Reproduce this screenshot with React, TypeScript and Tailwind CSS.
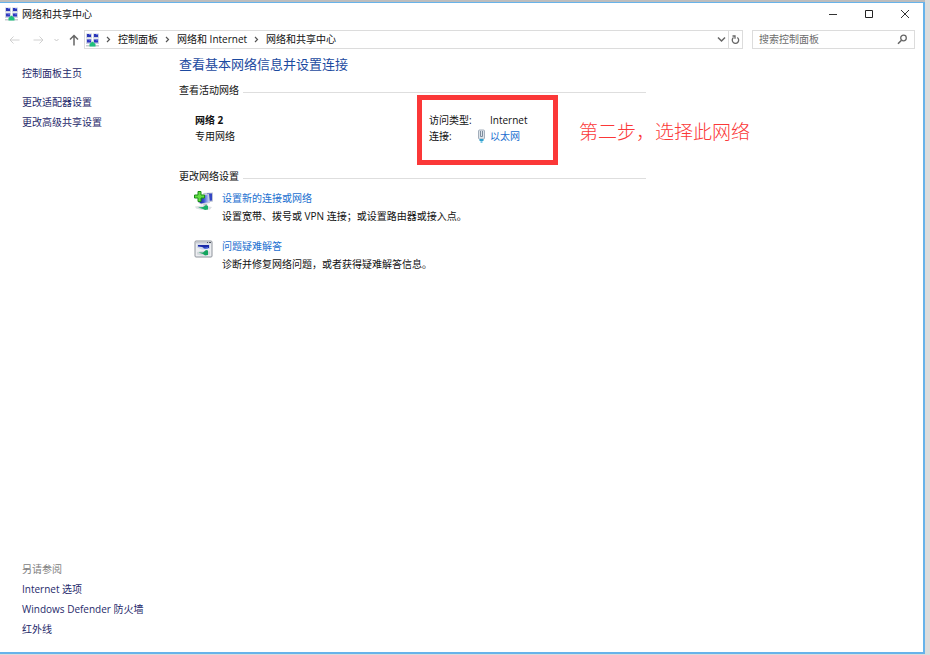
import type { ReactNode } from 'react';

const seeAlso = ['Internet 选项', 'Windows Defender 防火墙', '红外线'];
const crumbs = ['控制面板', '网络和 Internet', '网络和共享中心'];

function NetworkIcon() {
  return (
    <svg width="13" height="14" viewBox="0 0 13 14" className="shrink-0" aria-hidden="true">
      <path d="M0 .5h6v5H0zM7 .5h6v5H7zM0 6h6v5H0zM7 6h6v5H7z" fill="#cdd3e2" />
      <path d="M1 1h4v3H1zM8 1h4v3H8z" fill="#2a35b8" />
      <path d="M1 6.500h4v3H1zM8 6.500h4v3H8z" fill="#3038c0" />
      <path d="M3 1h2v1H3zM10 1h2v1h-2zM3 6.500h2v1H3zM10 6.500h2v1h-2z" fill="#6d7ee6" />
      <path d="M0 12h13v1.500H0z" fill="#c9ccd2" />
      <path d="M6.500 8.500l3 2.500v2.500h-6V11z" fill="#1fc07c" />
    </svg>
  );
}

function NewConnectionIcon() {
  return (
    <svg width="20" height="20" viewBox="0 0 20 20" className="shrink-0" aria-hidden="true">
      <defs>
        <linearGradient id="screen" x1="0" y1="0" x2="1" y2="0">
          <stop offset="0" stopColor="#0a1690" />
          <stop offset=".5" stopColor="#3c55d2" />
          <stop offset="1" stopColor="#c4d4fb" />
        </linearGradient>
      </defs>
      <path d="M9 2l10-.5v9l-5 1z" fill="#c0c6d6" />
      <path d="M13 2.500h5v7l-4 .5z" fill="#3446c4" />
      <path d="M4 4l11-1 1 9-9 1.500-3-2z" fill="#c6cddc" />
      <path d="M5 4.500l9-.5 1 7-8 1.500-2-1.500z" fill="url(#screen)" />
      <path d="M9 13.500l4-.5.500 1.500h-4z" fill="#a7acb8" />
      <path d="M1 15.500l7-1 10 1.500-2 2.500-8 .5-6-1.500z" fill="#dcdfe3" />
      <path d="M4 16.500l5-.5 3-2 2 1v3.500l-3 .5-2-1z" fill="#19b068" />
      <path d="M4 .500h3v3.500h3.500v3H7v3.500H4V7H.5V4H4z" fill="#62dd42" stroke="#1b8d18" />
    </svg>
  );
}

function TroubleshootIcon() {
  return (
    <svg width="20" height="18" viewBox="0 0 20 18" className="shrink-0" aria-hidden="true">
      <rect x="1" y="1" width="17" height="16" rx="1" fill="#eceef1" stroke="#8f949c" />
      <path d="M2 2h15v1.500H2z" fill="#c6cbd3" />
      <path d="M13 2.500h1M15 2.500h2" stroke="#4f5560" />
      <path d="M3 4.500h13v4.500l-8 .5-5-2z" fill="#ccd5ea" />
      <path d="M4 5h11v3l-4 .5L8 7 4 6.500z" fill="#1a2aa8" />
      <path d="M9 8l5-1v1.500l-3 .5z" fill="#4f6ee0" />
      <path d="M3 12l5-1 8 .5v3l-8 1-5-1z" fill="#d3d7dc" />
      <path d="M4.500 12.500H9l3-2.500 2 .5v4.500l-3 .5-2-1.500z" fill="#14a45f" />
    </svg>
  );
}

function EthernetIcon() {
  return (
    <svg width="9" height="14" viewBox="0 0 9 14" className="shrink-0" aria-hidden="true">
      <rect x="1.500" y="1" width="6" height="9" rx="1" fill="#dde3ea" stroke="#a3aebb" />
      <path d="M3.500 2v5.500h2V2" fill="none" stroke="#7d8c9c" />
      <path d="M2.500 10h4v2h-4z" fill="#2f9fcd" />
      <path d="M3.500 12h2v2h-2z" fill="#7cc8e6" />
    </svg>
  );
}

function Section({ title, children }: { title: string; children: ReactNode }) {
  return (
    <section>
      <div className="flex items-center gap-1">
        <h2 className="leading-4">{title}</h2>
        <div className="mt-1 h-px flex-1 bg-[#dedede]" />
      </div>
      {children}
    </section>
  );
}

function Task({ icon, title, text }: { icon: ReactNode; title: string; text: string }) {
  return (
    <li className="flex gap-2">
      <span className="flex h-6 items-center">{icon}</span>
      <div className="leading-[18px]">
        <a href="#" className="text-[#1a6fd0]">{title}</a>
        <p>{text}</p>
      </div>
    </li>
  );
}

export default function App() {
  return (
    <div className="flex h-screen flex-col bg-[#dcdcdc] pr-[5px] pb-px font-['Open_Sans','Noto_Sans_CJK_SC',sans-serif] text-[10px] text-[#111]">
      <div className="h-0.5 shrink-0 bg-[#bdbdbd]" />
      <div className="flex min-h-0 flex-1 flex-col border-t border-r-2 border-b-2 border-[#67b3ea] bg-white">
        <header className="flex h-[22px] shrink-0 items-center gap-1 pl-[5px]">
          <NetworkIcon />
          <h1>网络和共享中心</h1>
          <div className="ml-auto flex items-center">
            <button aria-label="最小化" className="flex w-9 justify-center">
              <svg width="10" height="10" viewBox="0 0 10 10"><path d="M1 5.500h8" stroke="#333" /></svg>
            </button>
            <button aria-label="最大化" className="flex w-9 justify-center">
              <svg width="10" height="10" viewBox="0 0 10 10"><path d="M1.500 1.500h7v7h-7z" fill="none" stroke="#222" /></svg>
            </button>
            <button aria-label="关闭" className="flex w-9 justify-center">
              <svg width="10" height="10" viewBox="0 0 10 10"><path d="M1 1l8 8M9 1l-8 8" stroke="#333" /></svg>
            </button>
          </div>
        </header>

        <div className="mt-[5px] flex h-[19px] shrink-0 items-center pr-2">
          <div className="flex w-[84px] items-center justify-between pr-[5px] pl-[9px]">
            <button aria-label="后退">
              <svg width="11" height="10" viewBox="0 0 11 10"><path d="M10.500 5H1M4.500 1.500L1 5l3.500 3.500" fill="none" stroke="#d0d0d0" /></svg>
            </button>
            <button aria-label="前进" className="ml-1">
              <svg width="11" height="10" viewBox="0 0 11 10"><path d="M.5 5H10M6.500 1.500L10 5 6.500 8.500" fill="none" stroke="#d0d0d0" /></svg>
            </button>
            <button aria-label="最近浏览的位置">
              <svg width="7" height="6" viewBox="0 0 7 6"><path d="M1.500 2l2 2 2-2" fill="none" stroke="#c8c8c8" /></svg>
            </button>
            <button aria-label="向上">
              <svg width="10" height="12" viewBox="0 0 10 12"><path d="M5 11.500V2M1 5.500l4-4 4 4" fill="none" stroke="#666" strokeWidth="1.500" /></svg>
            </button>
          </div>
          <div className="flex h-full flex-1 items-center border border-[#dcdcdc] pl-px">
            <NetworkIcon />
            <nav className="flex items-center">
              {crumbs.map((crumb) => (
                <span key={crumb} className="flex items-center">
                  <svg width="19" height="7" viewBox="0 0 19 7"><path d="M8 1l2.500 2.500L8 6" fill="none" stroke="#555" strokeWidth="1.200" /></svg>
                  <a href="#">{crumb}</a>
                </span>
              ))}
            </nav>
            <button aria-label="以前的位置" className="ml-auto flex h-full w-[14px] items-center justify-center">
              <svg width="9" height="7" viewBox="0 0 9 7"><path d="M1 1.500l3.500 3.500L8 1.500" fill="none" stroke="#666" strokeWidth="1.500" /></svg>
            </button>
            <button aria-label="刷新" className="flex h-full w-[14px] items-center justify-center border-l border-[#dcdcdc]">
              <svg width="9" height="10" viewBox="0 0 9 10"><path d="M6.300 2.500A3.200 3.200 0 1 1 2.500 2.600M1.500 1H4v2.800" fill="none" stroke="#666" strokeWidth="1.300" /></svg>
            </button>
          </div>
          <label className="ml-[9px] flex h-full w-[163px] items-center border border-[#dcdcdc] px-1.5">
            <input aria-label="搜索控制面板" placeholder="搜索控制面板" className="min-w-0 flex-1 outline-none placeholder:text-[#6d6d6d]" />
            <svg width="11" height="11" viewBox="0 0 11 11"><circle cx="6.500" cy="4" r="2.800" fill="none" stroke="#666" strokeWidth="1.300" /><path d="M4.500 6.200L1 9.800" stroke="#666" strokeWidth="1.500" /></svg>
          </label>
        </div>

        <div className="flex min-h-0 flex-1">
          <aside className="flex w-[179px] shrink-0 flex-col pb-[13px] pl-[22px] leading-5 text-[#1f2a6b]">
            <nav className="mt-[14px] flex flex-col items-start">
              <a href="#" className="mb-[9px]">控制面板主页</a>
              <a href="#">更改适配器设置</a>
              <a href="#">更改高级共享设置</a>
            </nav>
            <nav className="mt-auto flex flex-col items-start">
              <h2 className="text-[#808080]">另请参阅</h2>
              {seeAlso.map((item) => (
                <a key={item} href="#">{item}</a>
              ))}
            </nav>
          </aside>

          <main className="min-w-0 max-w-[467px] flex-1 pt-[5px]">
            <h2 className="mb-2 text-[13px] leading-5 text-[#1c4aa0]">查看基本网络信息并设置连接</h2>
            <Section title="查看活动网络">
              <div className="flex pt-[14px] pb-6 pl-4 leading-4">
                <div className="w-[234px]">
                  <p className="font-bold">网络 2</p>
                  <p>专用网络</p>
                </div>
                <div className="relative">
                  <dl className="grid grid-cols-[48px_auto]">
                    <dt>访问类型:</dt>
                    <dd className="pl-[13px]">Internet</dd>
                    <dt>连接:</dt>
                    <dd className="flex items-center gap-1">
                      <EthernetIcon />
                      <a href="#" className="text-[#1a6fd0]">以太网</a>
                    </dd>
                  </dl>
                  {/* Repère rouge autour de la connexion */}
                  <div className="pointer-events-none absolute -top-[17px] -left-3 h-[70px] w-[141px] border-[5px] border-[#fb3838]" />
                  <p className="absolute top-[6px] left-[150px] text-[19px] leading-7 font-light whitespace-nowrap text-[#fb3838]">
                    第二步，选择此网络
                  </p>
                </div>
              </div>
            </Section>
            <Section title="更改网络设置">
              <ul className="flex flex-col gap-3 pt-[5px] pl-[15px]">
                <Task icon={<NewConnectionIcon />} title="设置新的连接或网络" text="设置宽带、拨号或 VPN 连接；或设置路由器或接入点。" />
                <Task icon={<TroubleshootIcon />} title="问题疑难解答" text="诊断并修复网络问题，或者获得疑难解答信息。" />
              </ul>
            </Section>
          </main>
        </div>
      </div>
    </div>
  );
}
